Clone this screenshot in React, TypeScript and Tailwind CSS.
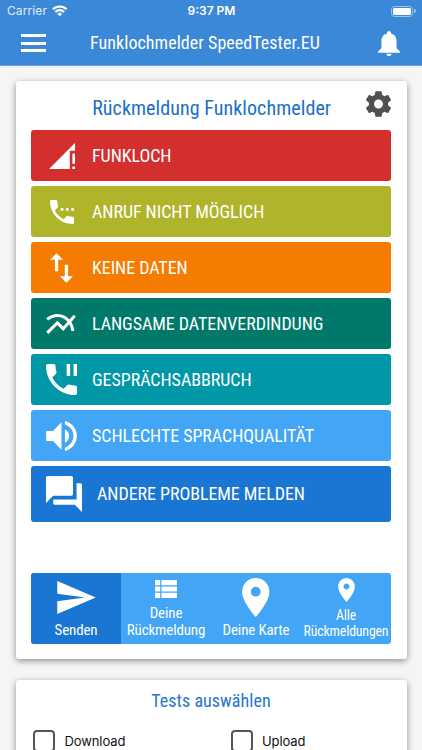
import React from "react";

const condensed = "font-['Roboto_Condensed','Roboto','Liberation_Sans',sans-serif] font-stretch-condensed whitespace-nowrap";

const phone =
  "M20 15.5c-1.25 0-2.45-.2-3.57-.57-.35-.11-.74-.03-1.02.24l-2.2 2.2c-2.83-1.44-5.14-3.75-6.59-6.58l2.2-2.2c.28-.28.36-.67.25-1.02C8.7 6.45 8.5 5.25 8.5 4c0-.55-.45-1-1-1H4c-.55 0-1 .45-1 1 0 9.39 7.61 17 17 17 .55 0 1-.45 1-1v-3.5c0-.55-.45-1-1-1z";
const pin =
  "M12 2C8.13 2 5 5.13 5 9c0 5.25 7 13 7 13s7-7.75 7-13c0-3.87-3.13-7-7-7zm0 9.5c-1.38 0-2.5-1.12-2.5-2.5s1.12-2.5 2.5-2.5 2.5 1.12 2.5 2.5-1.12 2.5-2.5 2.5z";

function Glyph({ box, d, className }: { box: string; d: string; className: string }) {
  return (
    <svg viewBox={box} className={`block shrink-0 fill-current ${className}`} aria-hidden="true">
      <path d={d} />
    </svg>
  );
}

const reports = [
  { label: "FUNKLOCH", color: "bg-[#d32f2f]", text: "ml-[17px]", box: "2 2 20 20", icon: "ml-[18px] size-[26px]", d: "M20 18h2v-8h-2v8zm0 4h2v-2h-2v2zM2 22h16V8h4V2L2 22z" },
  { label: "ANRUF NICHT MÖGLICH", color: "bg-[#afb42b]", text: "ml-[18.5px]", box: "3 3 18 18", icon: "ml-[18.5px] size-[24px]", d: phone + "M11 9h2v2h-2zM15 9h2v2h-2zM19 9h2v2h-2z" },
  { label: "KEINE DATEN", color: "bg-[#f57c00]", text: "ml-[19px]", box: "5 3 14 18", icon: "ml-[19px] w-[23px] h-[30px]", d: "M16 17.01V10h-2v7.01h-3L15 21l4-3.99h-3zM9 3L5 6.99h3V14h2V6.99h3L9 3z" },
  { label: "LANGSAME DATENVERDINDUNG", color: "bg-[#00796b]", text: "ml-[16px]", box: "2 5 20 13.5", icon: "ml-[15px] w-[30px] h-[20px]", d: "M22 6.92l-1.41-1.41-2.85 3.21C15.68 6.4 12.83 5 9.61 5 6.72 5 4.07 6.16 2 8l1.42 1.42C5.12 7.93 7.27 7 9.61 7c2.74 0 5.09 1.26 6.77 3.24l-2.88 3.24-4-4L2 16.99l1.5 1.5 6-6.01 4 4 4.05-4.55c.75 1.35 1.25 2.9 1.44 4.55H21c-.22-2.3-.95-4.39-2.04-6.14L22 6.92z" },
  { label: "GESPRÄCHSABBRUCH", color: "bg-[#0097a7]", text: "ml-[15px]", box: "3 3 18 18", icon: "ml-[15px] size-[31px]", d: phone + "M15 3h2v7h-2zM19 3h2v7h-2z" },
  { label: "SCHLECHTE SPRACHQUALITÄT", color: "bg-[#42a5f5]", text: "ml-[15px]", box: "3 3.2 18 17.6", icon: "ml-[15px] w-[31px] h-[30px]", d: "M3 9v6h4l5 5V4L7 9H3zm13.5 3c0-1.77-1.02-3.29-2.5-4.03v8.05c1.48-.73 2.5-2.25 2.5-4.02zM14 3.23v2.06c2.89.86 5 3.54 5 6.71s-2.11 5.85-5 6.71v2.06c4.01-.91 7-4.49 7-8.77s-2.99-7.86-7-8.77z" },
  { label: "ANDERE PROBLEME MELDEN", color: "bg-[#1976d2]", text: "ml-[15px]", box: "2 2 20 20", icon: "ml-[15px] size-[36px]", d: "M21 6h-2v9H6v2c0 .55.45 1 1 1h11l4 4V7c0-.55-.45-1-1-1zm-4 6V3c0-.55-.45-1-1-1H3c-.55 0-1 .45-1 1v14l4-4h10c.55 0 1-.45 1-1z" },
];

const cardShadow = "shadow-[0_2px_6px_rgba(0,0,0,0.42)]";

export default function App() {
  return (
    <div className="flex h-[750px] w-full flex-col overflow-hidden bg-[#f5f5f5]">
      <header className="flex h-[66px] shrink-0 flex-col border-b border-[#65a1e1] bg-[#3b88d8] text-white">
        <div className="grid h-[22px] grid-cols-3 items-center pl-[7px] pr-[6px] font-['Inter','Liberation_Sans',sans-serif] text-[12px] leading-[22px] text-[#e2edf9]">
          <div className="flex items-center gap-[5px]">
            <span className="tracking-[0.1px]">Carrier</span>
            <svg viewBox="0 0 16 12" className="h-[11.5px] w-[15.5px]" fill="none" stroke="white" strokeWidth="2.2">
              <path d="M.8 4.5a10.2 10.2 0 0 1 14.4 0M3.4 7.2a6.5 6.5 0 0 1 9.2 0" />
              <path d="M8 11.8 5.5 9.3a3.5 3.5 0 0 1 5 0z" fill="white" stroke="none" />
            </svg>
          </div>
          <span className="text-center font-semibold text-white">9:37 PM</span>
          <div className="flex items-center justify-end gap-px">
            <div className="h-[11px] w-[22px] rounded-[3.5px] border border-[#9dc4ec] p-px">
              <div className="h-full rounded-[1.5px] bg-white" />
            </div>
            <div className="h-1 w-[1.5px] rounded-r bg-[#9dc4ec]" />
          </div>
        </div>
        <div className="flex h-[42px] items-center pl-[21px] pr-[22px]">
          <div className="flex w-[25px] flex-col gap-[4.5px]">
            <div className="h-[3px] bg-white" />
            <div className="h-[3px] bg-white" />
            <div className="h-[3px] bg-white" />
          </div>
          <h1 className={`${condensed} ml-[44px] text-[18px] leading-[24px] tracking-[0.05px]`}>Funklochmelder SpeedTester.EU</h1>
          <Glyph box="0 0 22 25.4" className="ml-auto h-[25px] w-[22px]" d="M11 0c1.200 0 2 .8 2 2v.5c3.800.9 5.700 4 5.700 7.700v7.200l3.300 3.300V22H0v-1.300l3.300-3.300v-7.200C3.300 6.500 5.200 3.400 9 2.500V2c0-1.200.8-2 2-2zM8.500 23h5c-.1 1.400-1.100 2.400-2.500 2.400S8.600 24.400 8.500 23z" />
        </div>
      </header>

      <main className="flex flex-col gap-[21px] px-[15.5px] pt-[14.5px]">
        <section className={`flex h-[578.5px] shrink-0 flex-col rounded-[3px] bg-white px-[15.5px] ${cardShadow}`}>
          <div className="flex h-[49.5px] items-start justify-end gap-[35px] pt-[10.5px]">
            <h2 className={`${condensed} pt-[4px] text-[20px] leading-[26px] tracking-[0.07px] text-[#1b6fc7]`}>Rückmeldung Funklochmelder</h2>
            <Glyph box="2.27 2 19.46 20" className="h-[26px] w-[25px] text-[#505050]" d="M19.43 12.98c.04-.32.07-.64.07-.98s-.03-.66-.07-.98l2.11-1.65c.19-.15.24-.42.12-.64l-2-3.46c-.12-.22-.39-.3-.61-.22l-2.49 1c-.52-.4-1.08-.73-1.69-.98l-.38-2.65C14.46 2.18 14.25 2 14 2h-4c-.25 0-.46.18-.49.42l-.38 2.65c-.61.25-1.17.59-1.69.98l-2.49-1c-.23-.09-.49 0-.61.22l-2 3.46c-.13.22-.07.49.12.64l2.11 1.65c-.04.32-.07.65-.07.98s.03.66.07.98l-2.11 1.65c-.19.15-.24.42-.12.64l2 3.46c.12.22.39.3.61.22l2.49-1c.52.4 1.08.73 1.69.98l.38 2.65c.03.24.24.42.49.42h4c.25 0 .46-.18.49-.42l.38-2.65c.61-.25 1.17-.59 1.69-.98l2.49 1c.23.09.49 0 .61-.22l2-3.46c.12-.22.07-.49-.12-.64l-2.11-1.65zM12 15.5c-1.93 0-3.5-1.57-3.5-3.5s1.57-3.5 3.5-3.5 3.5 1.57 3.5 3.5-1.57 3.5-3.5 3.5z" />
          </div>
          <div className="flex flex-col gap-[5px]">
            {reports.map((r, i) => (
              <button key={r.label} className={`flex w-full items-center rounded-[3px] text-white ${i === 6 ? "h-[56px]" : "h-[51px]"} ${r.color}`}>
                <Glyph box={r.box} d={r.d} className={r.icon} />
                <span className={`${condensed} ${r.text} text-[18px] leading-[24px] tracking-[-0.06px]`}>{r.label}</span>
              </button>
            ))}
          </div>
          <nav className={`${condensed} mt-[51px] grid h-[71px] grid-cols-4 overflow-hidden rounded-[3px] bg-[#42a5f5] text-center text-[15px] leading-[17px] tracking-[-0.15px] text-white`}>
            <div className="flex flex-col items-center justify-end bg-[#1976d2] pb-[5px]">
              <Glyph box="2 3 21 18" className="mb-[8px] h-[33px] w-[39px]" d="M2.01 21L23 12 2.01 3 2 10l15 2-15 2z" />
              <span>Senden</span>
            </div>
            <div className="flex flex-col items-center justify-end pb-[5px]">
              <Glyph box="4 5 17 14" className="mb-[7px] h-[18px] w-[22px]" d="M4 14h4v-4H4v4zm0 5h4v-4H4v4zM4 9h4V5H4v4zm5 5h12v-4H9v4zm0 5h12v-4H9v4zM9 5v4h12V5H9z" />
              <span>Deine</span>
              <span>Rückmeldung</span>
            </div>
            <div className="flex flex-col items-center justify-end pb-[5px]">
              <Glyph box="5 2 14 20" className="mb-[5px] h-[39px] w-[27.5px]" d={pin} />
              <span>Deine Karte</span>
            </div>
            <div className="flex flex-col items-center justify-end pb-[5px] text-[13.8px] leading-[16px]">
              <Glyph box="5 2 14 20" className="mb-[5px] h-[24px] w-[17px]" d={pin} />
              <span>Alle</span>
              <span>Rückmeldungen</span>
            </div>
          </nav>
        </section>

        <section className={`h-[120px] shrink-0 rounded-[3px] bg-white px-[17.5px] pt-[8px] ${cardShadow}`}>
          <h2 className={`${condensed} text-center text-[18px] leading-[26px] tracking-[0.05px] text-[#2576cc]`}>Tests auswählen</h2>
          <div className="mt-[16px] grid grid-cols-[197.5px_1fr] font-['Inter','Liberation_Sans',sans-serif] text-[13px] tracking-[-0.1px] text-[#111]">
            {["Download", "Upload"].map((name) => (
              <label key={name} className="flex items-center gap-[9.5px]">
                <span className="size-[22px] rounded-[4px] border-2 border-[#555]" />
                <span className="pt-[2px]">{name}</span>
              </label>
            ))}
          </div>
        </section>
      </main>
    </div>
  );
}
